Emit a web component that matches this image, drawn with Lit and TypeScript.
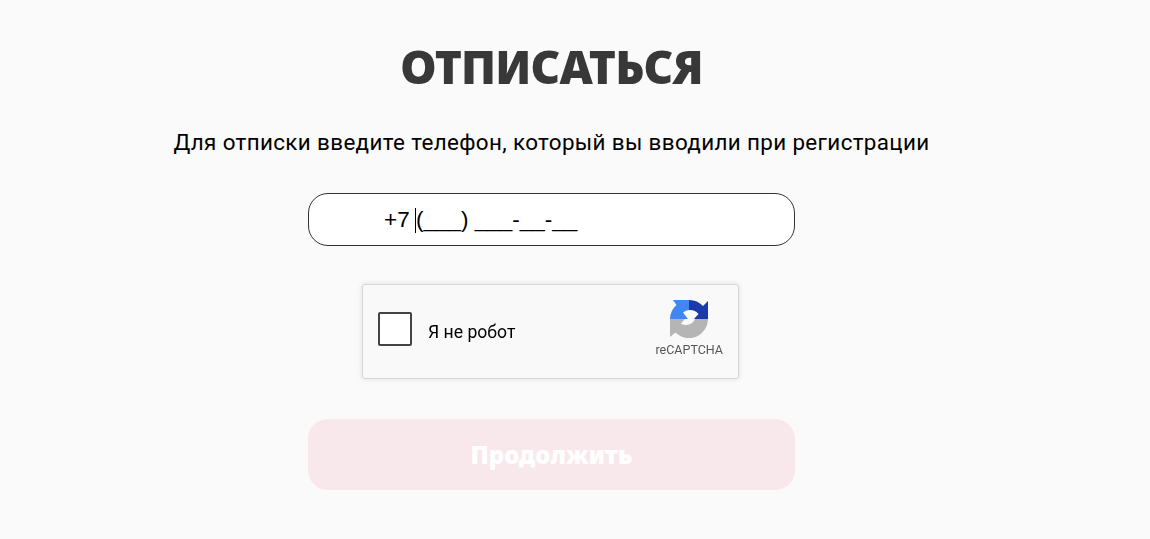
import { LitElement, html, css } from "lit";
import { customElement } from "lit/decorators.js";

@customElement("app-root")
export class AppRoot extends LitElement {
  static styles = css`
    :host { display: block; height: 539px; background: #fafafa; overflow: hidden; }
    .page { width: 1103px; display: flex; flex-direction: column; align-items: center; }
    h1 { margin: 30px 0 0; height: 73px; font: 900 46px/73px "Noto Sans", sans-serif; color: #383838; white-space: nowrap; letter-spacing: -0.8px; will-change: opacity; }
    .sub { margin: 22px 0 0; height: 34px; font: 400 22.4px/34px Roboto, sans-serif; color: #000; white-space: nowrap; letter-spacing: 0.365px; }
    .field { box-sizing: border-box; margin-top: 34px; width: 487px; height: 53px; border: 1px solid #333; border-radius: 20px; background: #fff; padding-left: 75px; font: 22.5px/51px "Liberation Sans", sans-serif; color: #000; white-space: pre; }
    .caret { display: inline-block; width: 0; height: 25px; border-left: 1px solid #000; margin-left: -1px; vertical-align: -6px; }
    .captcha { box-sizing: border-box; margin: 38px 2px 0 0; width: 377px; height: 95px; border: 1px solid #d6d6d6; border-radius: 3px; background: #f9f9f9; box-shadow: 0 0 4px 1px rgba(0,0,0,.08); display: flex; align-items: center; padding: 0 15px; will-change: opacity; }
    .box { box-sizing: border-box; width: 34px; height: 34px; border: 2px solid #444; border-radius: 2px; background: #fff; margin-bottom: 6px; }
    .label { margin-left: 16px; font: 400 17.6px/24px Roboto, sans-serif; color: #000; flex: 1; }
    .brand { display: flex; flex-direction: column; align-items: center; color: #555; font: 400 12.5px/14px Roboto, sans-serif; margin-bottom: 6px; }
    .brand svg { display: block; margin-bottom: 5px; }
    .btn { box-sizing: border-box; margin-top: 40px; width: 487px; height: 71px; border: 0; border-radius: 20px; background: #f9e8eb; color: #fff; font: 900 24px/69px "Noto Sans", sans-serif; text-align: center; padding: 0; will-change: opacity; }
  `;
  render() {
    return html`<div class="page">
      <h1>ОТПИСАТЬСЯ</h1>
      <p class="sub">Для отписки введите телефон, который вы вводили при регистрации</p>
      <div class="field">+7 <span class="caret"></span>(___) ___-__-__</div>
      <div class="captcha">
        <div class="box"></div>
        <div class="label">Я не робот</div>
        <div class="brand">
          <svg width="38" height="38" viewBox="0 0 38 38">
            <path fill="#1c3aa9" d="M19 0A19 19 0 0 1 33 6L38 1V19H24L28.5 14A11 11 0 0 0 19 10Z"/>
            <path fill="#4285f4" d="M3 0H19V10A11 11 0 0 0 13 12.5L18 19H0A19 19 0 0 1 6.5 5Z"/>
            <path fill="#b5b5b5" d="M0 19H15L11 23.5A9.5 9.5 0 0 0 25 19H38A19 19 0 0 1 5.5 32.5L0 37Z"/>
          </svg>
          <span>reCAPTCHA</span>
        </div>
      </div>
      <button class="btn">Продолжить</button>
    </div>`;
  }
}
